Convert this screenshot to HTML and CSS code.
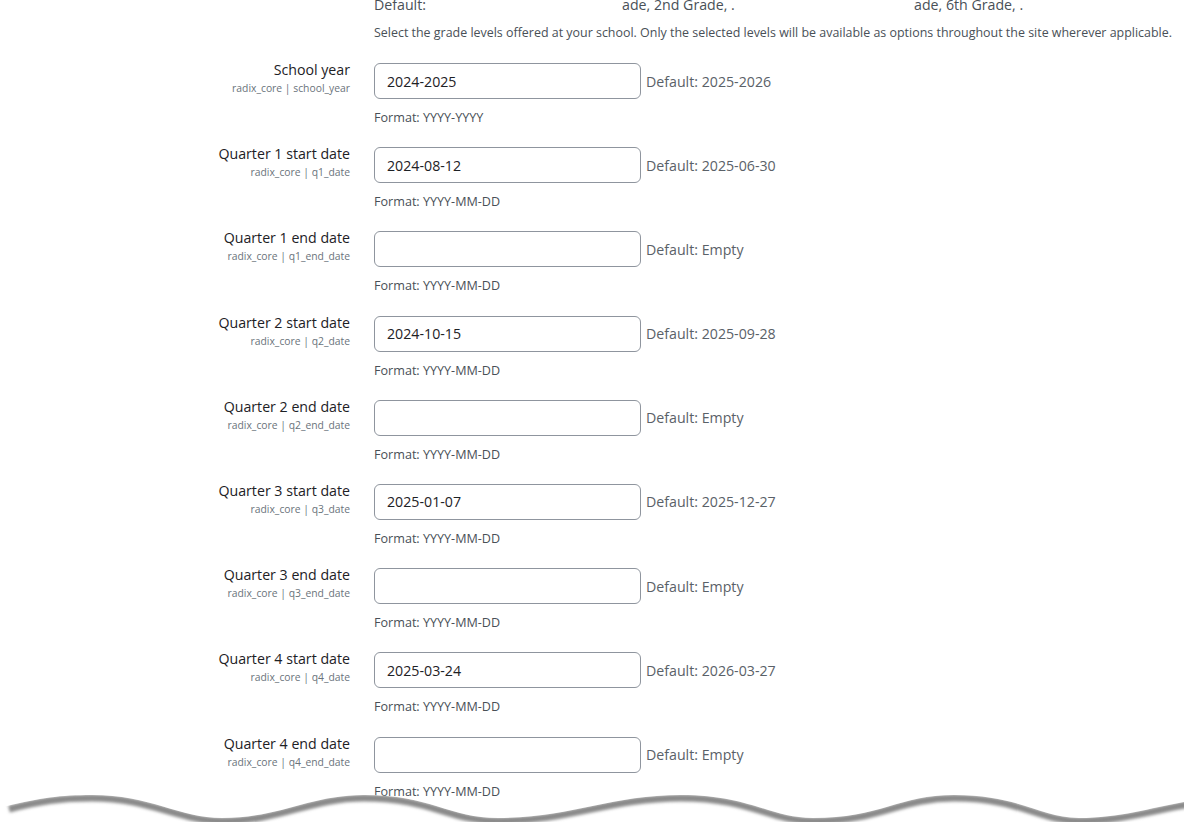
FILE: index.html
```html
<!DOCTYPE html>
<html lang="en">
<head>
  <meta charset="UTF-8">
  <meta name="viewport" content="width=device-width, initial-scale=1.0">
  <title>Radix core settings</title>
  <link rel="stylesheet" href="styles.css">
</head>
<body>
  <div class="page">
    <div class="prev">
      <div class="prev-default">
        <span class="frag f1">Default:</span><span class="frag f2">ade, 2nd Grade, .</span><span class="frag f3">ade, 6th Grade, .</span>
      </div>
      <div class="desc">Select the grade levels offered at your school. Only the selected levels will be available as options throughout the site wherever applicable.</div>
    </div>

    <div class="setting">
      <div class="setting-label"><label>School year</label><span class="setting-key">radix_core | school_year</span></div>
      <div class="setting-control">
        <div class="control-row"><input class="form-input" type="text" value="2024-2025"><span class="default">Default: 2025-2026</span></div>
        <div class="format">Format: YYYY-YYYY</div>
      </div>
    </div>

    <div class="setting">
      <div class="setting-label"><label>Quarter 1 start date</label><span class="setting-key">radix_core | q1_date</span></div>
      <div class="setting-control">
        <div class="control-row"><input class="form-input" type="text" value="2024-08-12"><span class="default">Default: 2025-06-30</span></div>
        <div class="format">Format: YYYY-MM-DD</div>
      </div>
    </div>

    <div class="setting">
      <div class="setting-label"><label>Quarter 1 end date</label><span class="setting-key">radix_core | q1_end_date</span></div>
      <div class="setting-control">
        <div class="control-row"><input class="form-input" type="text" value=""><span class="default">Default: Empty</span></div>
        <div class="format">Format: YYYY-MM-DD</div>
      </div>
    </div>

    <div class="setting">
      <div class="setting-label"><label>Quarter 2 start date</label><span class="setting-key">radix_core | q2_date</span></div>
      <div class="setting-control">
        <div class="control-row"><input class="form-input" type="text" value="2024-10-15"><span class="default">Default: 2025-09-28</span></div>
        <div class="format">Format: YYYY-MM-DD</div>
      </div>
    </div>

    <div class="setting">
      <div class="setting-label"><label>Quarter 2 end date</label><span class="setting-key">radix_core | q2_end_date</span></div>
      <div class="setting-control">
        <div class="control-row"><input class="form-input" type="text" value=""><span class="default">Default: Empty</span></div>
        <div class="format">Format: YYYY-MM-DD</div>
      </div>
    </div>

    <div class="setting">
      <div class="setting-label"><label>Quarter 3 start date</label><span class="setting-key">radix_core | q3_date</span></div>
      <div class="setting-control">
        <div class="control-row"><input class="form-input" type="text" value="2025-01-07"><span class="default">Default: 2025-12-27</span></div>
        <div class="format">Format: YYYY-MM-DD</div>
      </div>
    </div>

    <div class="setting">
      <div class="setting-label"><label>Quarter 3 end date</label><span class="setting-key">radix_core | q3_end_date</span></div>
      <div class="setting-control">
        <div class="control-row"><input class="form-input" type="text" value=""><span class="default">Default: Empty</span></div>
        <div class="format">Format: YYYY-MM-DD</div>
      </div>
    </div>

    <div class="setting">
      <div class="setting-label"><label>Quarter 4 start date</label><span class="setting-key">radix_core | q4_date</span></div>
      <div class="setting-control">
        <div class="control-row"><input class="form-input" type="text" value="2025-03-24"><span class="default">Default: 2026-03-27</span></div>
        <div class="format">Format: YYYY-MM-DD</div>
      </div>
    </div>

    <div class="setting">
      <div class="setting-label"><label>Quarter 4 end date</label><span class="setting-key">radix_core | q4_end_date</span></div>
      <div class="setting-control">
        <div class="control-row"><input class="form-input" type="text" value=""><span class="default">Default: Empty</span></div>
        <div class="format">Format: YYYY-MM-DD</div>
      </div>
    </div>

    <!-- torn paper edge of the screenshot -->
    <svg class="torn-edge" width="1184" height="40" viewBox="0 0 1184 40">
      <defs>
        <filter id="soft" x="-5%" y="-50%" width="110%" height="200%"><feGaussianBlur stdDeviation="1.6"/></filter>
        <clipPath id="below">
          <path d="M7,24 C40,16 60,13 92,13 C150,13 180,36 222,36 C280,36 310,13 364,13 C430,13 450,36 498,36 C570,36 610,13 681,13 C750,13 770,36 813,36 C880,36 900,13 954,13 C1020,13 1040,36 1079,36 C1120,36 1150,26 1184,20 L1184,40 L0,40 L0,24 Z"/>
        </clipPath>
      </defs>
      <path fill="#fff" d="M7,24 C40,16 60,13 92,13 C150,13 180,36 222,36 C280,36 310,13 364,13 C430,13 450,36 498,36 C570,36 610,13 681,13 C750,13 770,36 813,36 C880,36 900,13 954,13 C1020,13 1040,36 1079,36 C1120,36 1150,26 1184,20 L1184,40 L0,40 L0,24 Z"/>
      <g clip-path="url(#below)">
        <path fill="none" stroke="#8a8a8a" stroke-width="7" filter="url(#soft)" transform="translate(0,3)" d="M9,24 C40,16 60,13 92,13 C150,13 180,36 222,36 C280,36 310,13 364,13 C430,13 450,36 498,36 C570,36 610,13 681,13 C750,13 770,36 813,36 C880,36 900,13 954,13 C1020,13 1040,36 1079,36 C1120,36 1150,26 1190,19"/>
      </g>
    </svg>
  </div>
</body>
</html>
```

FILE: styles.css
```css
* { box-sizing: border-box; }
body { margin: 0; background: #fff; color: #1d2125; font-family: 'Open Sans', 'Noto Sans', sans-serif; }
.page { position: relative; width: 1184px; height: 822px; overflow: hidden; }

.prev { display: flow-root; height: 60px; padding-left: 374px; }
.prev-default { display: flex; margin-top: -5px; height: 20px; line-height: 20px; font-size: 14.2px; color: #495057; white-space: nowrap; }
.frag.f1 { width: 248px; }
.frag.f2 { width: 292px; }
.desc { margin-top: 9px; line-height: 18px; font-size: 12.45px; color: #495057; white-space: nowrap; }

.setting { display: flex; height: 84.2px; }
.setting-label { width: 350px; text-align: right; }
.setting-label label { display: block; line-height: 20px; font-size: 14.2px; color: #1d2125; }
.setting-key { display: block; line-height: 17px; font-size: 10.35px; color: #6a737b; }
.setting-control { margin-left: 24px; padding-top: 3px; }
.control-row { display: flex; align-items: center; }
.form-input { width: 267px; height: 36px; padding: 0 12px; border: 1px solid #8f959e; border-radius: 6px; font-family: inherit; font-size: 14.2px; color: #1d2125; background: #fff; }
.default { margin-left: 5px; font-size: 14.2px; color: #5a6168; }
.format { margin-top: 10px; line-height: 18px; font-size: 12.6px; color: #495057; }

.torn-edge { position: absolute; left: 0; bottom: 0; display: block; }
```
